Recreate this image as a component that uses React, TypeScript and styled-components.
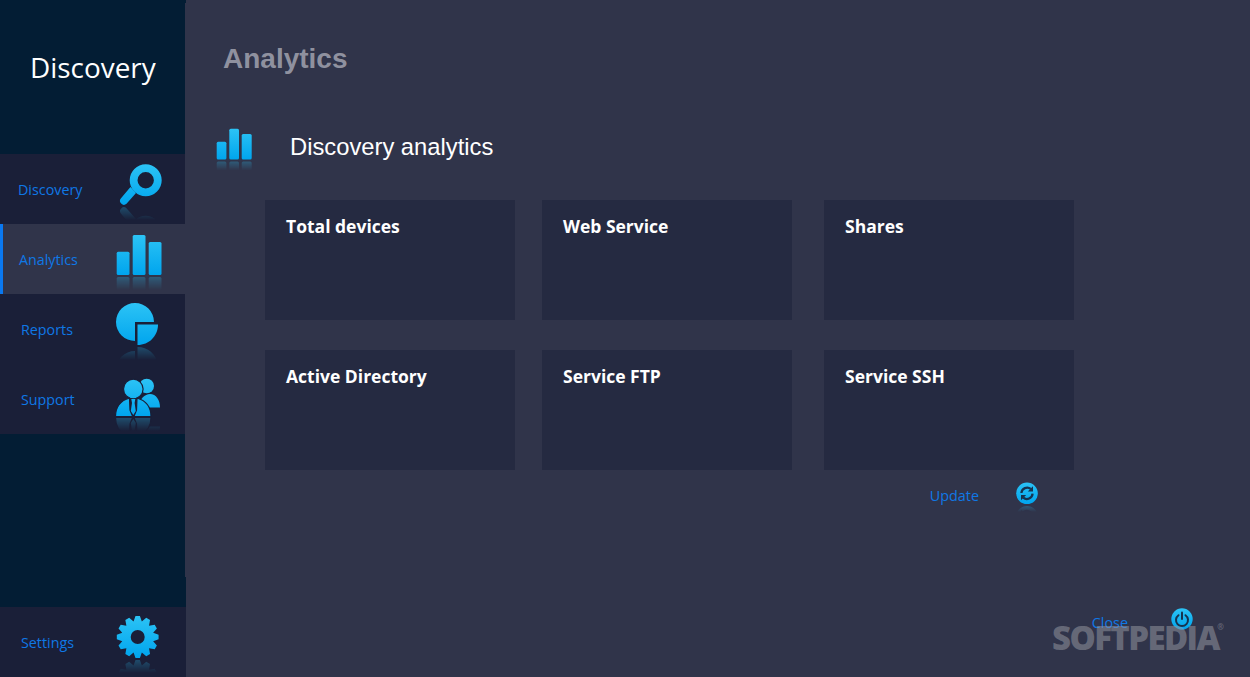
import React, { useId } from "react";
import styled, { createGlobalStyle } from "styled-components";

const GlobalStyle = createGlobalStyle`
  html, body {
    margin: 0;
    padding: 0;
    height: 100%;
    background: #30344a;
    overflow: hidden;
  }
  #root {
    height: 100%;
  }
`;

const Window = styled.div`
  position: relative;
  display: flex;
  width: 1250px;
  height: 677px;
  overflow: hidden;
  background: #30344a;
`;

const Sidebar = styled.aside`
  position: relative;
  display: flex;
  flex-direction: column;
  width: 186px;
  flex-shrink: 0;
  background: #031d34;

  /* the panel is a pixel narrower between these two heights */
  &::after {
    content: "";
    position: absolute;
    top: 3px;
    right: 0;
    width: 1px;
    height: 574px;
    background: #30344a;
  }
`;

const Brand = styled.div`
  height: 154px;
  box-sizing: border-box;
  padding: 49px 0 0 30px;
  font-family: "Open Sans", "Liberation Sans", sans-serif;
  font-size: 27.9px;
  line-height: 37px;
  color: #ffffff;
`;

const NavRow = styled.div<{ $active?: boolean; $left: number }>`
  display: flex;
  align-items: center;
  justify-content: space-between;
  height: 70px;
  box-sizing: border-box;
  padding: 0 22px 0 ${({ $left }) => $left}px;
  background: ${({ $active }) => ($active ? "#30344a" : "#1a1f38")};
  border-left: ${({ $active }) => ($active ? "3px solid #0a78f0" : "none")};
`;

const NavLabel = styled.span`
  font-family: "Open Sans", "Liberation Sans", sans-serif;
  font-size: 14.3px;
  color: #0f78e6;
`;

const Spacer = styled.div`
  flex: 1;
`;

const Main = styled.main`
  display: flex;
  flex: 1;
  flex-direction: column;
  padding: 41px 0 0 37px;
  font-family: "Liberation Sans", Arial, sans-serif;
`;

const Title = styled.h1`
  margin: 0;
  font-size: 28px;
  line-height: 36px;
  font-weight: 700;
  color: #8f919f;
`;

const SectionHead = styled.div`
  display: flex;
  align-items: center;
  gap: 36px;
  height: 50px;
  margin: 45px 0 0 -9px;
`;

const SectionTitle = styled.h2`
  margin: 0;
  font-size: 23.75px;
  font-weight: 400;
  color: #ffffff;
`;

const CardGrid = styled.div`
  display: grid;
  grid-template-columns: 277px 282px 250px;
  grid-auto-rows: 120px;
  row-gap: 30px;
  margin: 28px 0 0 42px;
`;

const Card = styled.div`
  width: 250px;
  box-sizing: border-box;
  padding: 14px 21px;
  background: #252a41;
  font-family: "Open Sans", "Liberation Sans", sans-serif;
  font-size: 17.5px;
  line-height: 25px;
  font-weight: 700;
  color: #ffffff;
`;

const ActionLabel = styled.span`
  font-family: "Open Sans", "Liberation Sans", sans-serif;
  font-size: 14.4px;
  line-height: 20px;
  color: #0f78e6;
`;

const ActionRow = styled.div<{ $gap: number; $right: number }>`
  display: flex;
  justify-content: flex-end;
  gap: ${({ $gap }) => $gap}px;
  padding-right: ${({ $right }) => $right}px;
`;

const UpdateRow = styled(ActionRow)`
  align-items: center;
  margin-top: 10px;

  ${ActionLabel} {
    margin-bottom: 2px;
  }
`;

const CloseRow = styled(ActionRow)`
  align-items: flex-start;
  margin-top: auto;
  margin-bottom: 44px;

  ${ActionLabel} {
    margin-top: 6px;
  }
`;

const Watermark = styled.div`
  position: absolute;
  left: 1052px;
  top: 619px;
  font-family: "Open Sans", "Liberation Sans", sans-serif;
  font-size: 33px;
  line-height: 38px;
  font-weight: 800;
  letter-spacing: -1.6px;
  color: rgba(148, 150, 160, 0.55);
  pointer-events: none;

  sup {
    position: absolute;
    top: 3px;
    right: -5px;
    font-size: 8px;
    line-height: 10px;
    font-weight: 700;
    letter-spacing: 0;
  }
`;

type GlossyProps = {
  x: number;
  y: number;
  w: number;
  h: number;
  top: number;
  bottom: number;
  fade?: number;
  children: React.ReactNode;
};

// drawn in page coordinates, the viewBox crops to the slot of the icon
function Glossy({ x, y, w, h, top, bottom, fade = 14, children }: GlossyProps) {
  const id = useId();
  const mirror = bottom + 1;
  return (
    <svg width={w} height={h} viewBox={`${x} ${y} ${w} ${h}`} style={{ flexShrink: 0 }}>
      <defs>
        <linearGradient id={`${id}g`} gradientUnits="userSpaceOnUse" x1="0" x2="0" y1={top} y2={bottom}>
          <stop offset="0" stopColor="#2cc3f5" />
          <stop offset="1" stopColor="#00a5ee" />
        </linearGradient>
        <linearGradient id={`${id}f`} gradientUnits="userSpaceOnUse" x1="0" x2="0" y1={mirror} y2={mirror + fade}>
          <stop offset="0" stopColor="#fff" stopOpacity="0.3" />
          <stop offset="1" stopColor="#fff" stopOpacity="0" />
        </linearGradient>
        <mask id={`${id}m`} maskUnits="userSpaceOnUse" x={x} y={y} width={w} height={h}>
          <rect x={x} y={mirror} width={w} height={fade} fill={`url(#${id}f)`} />
        </mask>
      </defs>
      <g mask={`url(#${id}m)`}>
        <g fill="#2cc3f5" transform={`translate(0 ${2 * mirror}) scale(1 -1)`}>
          {children}
        </g>
      </g>
      <g fill={`url(#${id}g)`}>{children}</g>
    </svg>
  );
}

const gearPath = (() => {
  const cx = 137.7;
  const cy = 637;
  const teeth = 12;
  const pts: string[] = [];
  for (let i = 0; i < teeth; i++) {
    const a = (i / teeth) * Math.PI * 2 - Math.PI / 2;
    const step = (Math.PI * 2) / teeth;
    const spots: [number, number][] = [
      [16, -0.5],
      [21, -0.2],
      [21, 0.2],
      [16, 0.5],
    ];
    spots.forEach(([r, k]) => {
      const t = a + k * step;
      pts.push(`${(cx + r * Math.cos(t)).toFixed(2)} ${(cy + r * Math.sin(t)).toFixed(2)}`);
    });
  }
  return `M${pts.join("L")}Z M${cx + 7} ${cy}a7 7 0 1 0 -14 0a7 7 0 1 0 14 0Z`;
})();

const SearchIcon = () => (
  <Glossy x={114} y={154} w={50} h={70} top={164} bottom={205}>
    <path
      fillRule="evenodd"
      d="M145.700 164.300a16 16 0 1 1 0 32a16 16 0 1 1 0 -32Zm0 7.800a8.200 8.200 0 1 0 0 16.400a8.200 8.200 0 1 0 0 -16.400Z"
    />
    <path d="M130.500 187l5.500 6l-9.500 10.800a3.900 3.900 0 0 1 -5.500 -5.500Z" />
  </Glossy>
);

const BarsIcon = () => (
  <Glossy x={114} y={224} w={50} h={70} top={235} bottom={275}>
    <rect x="116.700" y="251.700" width="12.800" height="23.300" rx="1.500" />
    <rect x="132.700" y="235" width="12.800" height="40" rx="1.500" />
    <rect x="148.700" y="242" width="12.800" height="33" rx="1.500" />
  </Glossy>
);

const PieIcon = () => (
  <Glossy x={114} y={294} w={50} h={70} top={303} bottom={345}>
    <path d="M135 322V341A19 19 0 1 1 154 322Z" />
    <path d="M137.500 324.500H158C158 336 149 345 137.500 345Z" />
  </Glossy>
);

const PeopleIcon = () => (
  <Glossy x={114} y={364} w={50} h={70} top={379} bottom={416}>
    <circle cx="146.700" cy="386" r="7.300" />
    <path d="M139 407.500C139 399 145 394 150 394C156 394 160 400 160 407.500Z" />
    <g stroke="#1a1f38" strokeWidth="1.200">
      <circle cx="133.300" cy="389" r="9.800" />
      <path d="M115.500 416.500C115.500 407 121 400.500 129.500 398L130 410L132.700 416.500Z" />
      <path d="M151 416.500C151 407 145.500 400.500 137 398L136.500 410L133.900 416.500Z" />
    </g>
    <path d="M131.300 399H135.300L134.600 403L135.800 411L133.300 415L130.800 411L132 403Z" />
  </Glossy>
);

const GearIcon = () => (
  <Glossy x={114} y={607} w={50} h={70} top={616} bottom={658}>
    <path fillRule="evenodd" d={gearPath} />
  </Glossy>
);

const SmallBars = () => (
  <Glossy x={214} y={122} w={40} h={50} top={129} bottom={159.500} fade={10}>
    <rect x="216.700" y="141.700" width="9.700" height="17.700" rx="1.500" />
    <rect x="229.300" y="128.700" width="9.700" height="30.700" rx="1.500" />
    <rect x="241.700" y="134" width="10" height="25.400" rx="1.500" />
  </Glossy>
);

const RefreshIcon = () => (
  <Glossy x={1014} y={480} w={26} h={34} top={482} bottom={504} fade={7}>
    <circle cx="1027" cy="493.300" r="10.800" />
    <g fill="none" stroke="#16334f" strokeWidth="2.200">
      <path d="M1021.400 493A5.800 5.800 0 0 1 1030.800 488.900" />
      <path d="M1032.600 493.600A5.800 5.800 0 0 1 1023.200 497.700" />
    </g>
    <path fill="#16334f" d="M1033 486.300V491.500H1027.800Z" />
    <path fill="#16334f" d="M1021 500.300V495.100H1026.200Z" />
  </Glossy>
);

const PowerIcon = () => (
  <svg width="24" height="24" viewBox="0 0 24 24" style={{ flexShrink: 0 }}>
    <defs>
      <linearGradient id="powerFill" x1="0" x2="0" y1="0" y2="1">
        <stop offset="0" stopColor="#2cc3f5" />
        <stop offset="1" stopColor="#00a5ee" />
      </linearGradient>
    </defs>
    <circle cx="12" cy="12" r="10.700" fill="url(#powerFill)" />
    <g fill="none" stroke="#16334f" strokeWidth="2" strokeLinecap="round">
      <path d="M8.500 8.200A6 6 0 1 0 15.500 8.200" />
      <path d="M12 5.500V12" />
    </g>
  </svg>
);

const NAV = [
  { label: "Discovery", left: 18, icon: <SearchIcon /> },
  { label: "Analytics", left: 16, icon: <BarsIcon />, active: true },
  { label: "Reports", left: 21, icon: <PieIcon /> },
  { label: "Support", left: 21, icon: <PeopleIcon /> },
];

const CARDS = ["Total devices", "Web Service", "Shares", "Active Directory", "Service FTP", "Service SSH"];

export default function App() {
  return (
    <Window>
      <GlobalStyle />
      <Sidebar>
        <Brand>Discovery</Brand>
        {NAV.map((item) => (
          <NavRow key={item.label} $left={item.left} $active={item.active}>
            <NavLabel>{item.label}</NavLabel>
            {item.icon}
          </NavRow>
        ))}
        <Spacer />
        <NavRow $left={21}>
          <NavLabel>Settings</NavLabel>
          <GearIcon />
        </NavRow>
      </Sidebar>
      <Main>
        <Title>Analytics</Title>
        <SectionHead>
          <SmallBars />
          <SectionTitle>Discovery analytics</SectionTitle>
        </SectionHead>
        <CardGrid>
          {CARDS.map((name) => (
            <Card key={name}>{name}</Card>
          ))}
        </CardGrid>
        <UpdateRow $gap={35} $right={210}>
          <ActionLabel>Update</ActionLabel>
          <RefreshIcon />
        </UpdateRow>
        <CloseRow $gap={42} $right={56}>
          <ActionLabel>Close</ActionLabel>
          <PowerIcon />
        </CloseRow>
      </Main>
      <Watermark>
        SOFTPEDIA<sup>®</sup>
      </Watermark>
    </Window>
  );
}
